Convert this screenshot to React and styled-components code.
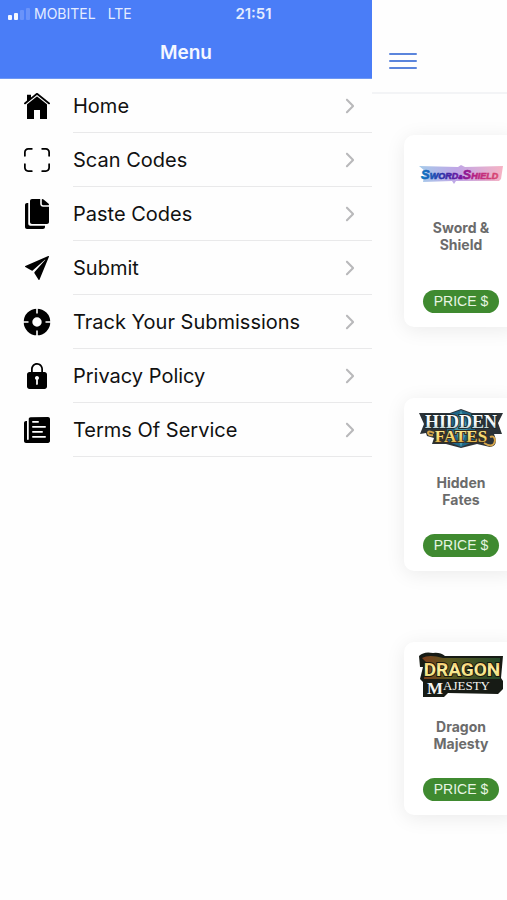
import styled, { createGlobalStyle } from 'styled-components';
import {
    IoIosArrowForward,
    IoIosCopy,
    IoIosHome,
    IoIosLock,
    IoIosPaper,
    IoIosQrScanner,
    IoIosSend,
} from 'react-icons/io';

// solid ring with four slits and an open centre
const TrackIcon = ({ size }) => (
    <svg width={size} height={size} viewBox="0 0 32 32" aria-hidden="true">
        <circle cx="16" cy="16" r="9" fill="none" stroke="#000" strokeWidth="8.6" />
        <path d="M16 2 V7.5 M16 24.5 V30 M2 16 H7.5 M24.5 16 H30" stroke="#fefefe" strokeWidth="1.6" />
    </svg>
);

const links = [
    { label: 'Home', Icon: IoIosHome },
    { label: 'Scan Codes', Icon: IoIosQrScanner },
    { label: 'Paste Codes', Icon: IoIosCopy },
    { label: 'Submit', Icon: IoIosSend },
    { label: 'Track Your Submissions', Icon: TrackIcon },
    { label: 'Privacy Policy', Icon: IoIosLock },
    { label: 'Terms Of Service', Icon: IoIosPaper },
];

const SwordShieldLogo = () => (
    <Logo viewBox="0 0 86 58" $height={58} aria-hidden="true">
        <defs>
            <linearGradient id="sword" gradientUnits="userSpaceOnUse" x1="4" x2="84" y1="0" y2="0">
                <stop offset="0" stopColor="#0f76c0" />
                <stop offset="0.25" stopColor="#2b2fa6" />
                <stop offset="0.48" stopColor="#7416a0" />
                <stop offset="0.65" stopColor="#b51f82" />
                <stop offset="1" stopColor="#e0506e" />
            </linearGradient>
            <linearGradient id="swordBack" x1="0" x2="1">
                <stop offset="0" stopColor="#a5cbea" />
                <stop offset="0.45" stopColor="#c0a6e6" />
                <stop offset="1" stopColor="#f6b3c4" />
            </linearGradient>
        </defs>
        <path d="M1 21 L40 22 L43 20 L47 22 L85 21 L83 34 L81 36 L38 36 L36 39 L34 36 L5 37 L7 26 Z" fill="url(#swordBack)" />
        <text x="3" y="34" fill="url(#sword)" stroke="url(#sword)" strokeWidth="0.6" fontFamily="Liberation Sans, sans-serif" fontWeight="700" fontStyle="italic" fontSize="9">
            <tspan fontSize="13">S</tspan>WORD<tspan fontSize="6">&amp;</tspan><tspan fontSize="13">S</tspan>HIELD
        </text>
    </Logo>
);

const HiddenFatesLogo = () => (
    <Logo viewBox="0 0 86 46" $height={46} aria-hidden="true">
        <defs>
            <linearGradient id="hidden" x1="0" x2="0" y1="0" y2="1">
                <stop offset="0" stopColor="#ffffff" />
                <stop offset="0.6" stopColor="#f0f6f7" />
                <stop offset="1" stopColor="#8fb2b4" />
            </linearGradient>
            <linearGradient id="fates" x1="0" x2="0" y1="0" y2="1">
                <stop offset="0" stopColor="#fff3a0" />
                <stop offset="0.6" stopColor="#f3d465" />
                <stop offset="1" stopColor="#c68e30" />
            </linearGradient>
        </defs>
        <path d="M1 5 H32 L43 1 L54 5 H85 L80 15 L84 26 H76 Q81 38 72 39 L59 36 L43 40 L28 36 H14 L16 30 L9 28 L8 25 L2 26 L6 16 Z" fill="#2c3338" />
        <path d="M43 2 L57 7 V33 L43 39 L29 33 V7 Z" fill="#1f6687" />
        <path d="M43 2 L50 20 L43 39 L36 20 Z" fill="#4596ab" />
        <text x="43" y="20" textAnchor="middle" fill="url(#hidden)" stroke="#20292d" strokeWidth="2" paintOrder="stroke" fontFamily="Liberation Serif, serif" fontWeight="700" fontSize="18">HIDDEN</text>
        <text x="43" y="34" textAnchor="middle" fill="url(#fates)" stroke="#3a2f20" strokeWidth="2" paintOrder="stroke" fontFamily="Liberation Serif, serif" fontWeight="700" fontSize="17">FATES</text>
        <path d="M16 25 Q10 22 10 25 Q11 28 15 27 M66 35 Q76 41 77 32 Q76 27 72 29" fill="none" stroke="#d5a449" strokeWidth="2" />
    </Logo>
);

const DragonMajestyLogo = () => (
    <Logo viewBox="0 0 86 46" $height={46} aria-hidden="true">
        <defs>
            <linearGradient id="dragon" x1="0" x2="0" y1="0" y2="1">
                <stop offset="0" stopColor="#e8a943" />
                <stop offset="0.45" stopColor="#fff0a0" />
                <stop offset="1" stopColor="#dfcf62" />
            </linearGradient>
            <linearGradient id="dragonGlow" x1="0" x2="1">
                <stop offset="0" stopColor="#7d3d1c" />
                <stop offset="0.35" stopColor="#5b5a20" />
                <stop offset="1" stopColor="#24482a" />
            </linearGradient>
        </defs>
        <path d="M1 4 Q6 -1 15 1 Q22 0 27 4 H85 L83 26 L85 29 V37 L80 42 L30 41 L26 45 H5 V30 L2 27 L5 15 H2 Z" fill="#171b15" />
        <path d="M4 6 Q11 2 25 6 H82 V27 H6 L8 10 Z" fill="url(#dragonGlow)" />
        <text x="44" y="24" textAnchor="middle" fill="url(#dragon)" stroke="#17170f" strokeWidth="2" paintOrder="stroke" fontFamily="Roboto, sans-serif" fontWeight="700" fontSize="19">DRAGON</text>
        <text x="9" y="42" fill="#f4f5f2" fontFamily="Liberation Serif, serif" fontWeight="700" fontSize="17">
            M<tspan y="38" fontSize="13" fontWeight="400">AJESTY</tspan>
        </text>
    </Logo>
);

const sets = [
    { name: 'Sword & Shield', Artwork: SwordShieldLogo, tall: true },
    { name: 'Hidden Fates', Artwork: HiddenFatesLogo },
    { name: 'Dragon Majesty', Artwork: DragonMajestyLogo },
];

const App = () => {
    return (<>
        <GlobalStyle />
        <Screen>
            <Drawer>
                <DrawerHeader>
                    <h1>Menu</h1>
                </DrawerHeader>
                <nav>
                    {links.map(({ label, Icon }) =>
                        <MenuLink key={label} href="#">
                            <Icon size={32} />
                            <MenuLabel>{label}<IoIosArrowForward size={22} color="#b9b9bb" /></MenuLabel>
                        </MenuLink>
                    )}
                </nav>
            </Drawer>
            <Page>
                <Toolbar>
                    <MenuButton type="button" aria-label="Toggle menu">
                        <span /><span /><span />
                    </MenuButton>
                </Toolbar>
                <Cards>
                    {sets.map(({ name, Artwork, tall }) =>
                        <Card key={name}>
                            <Artwork />
                            <Name $tall={tall}>{name}</Name>
                            <Price type="button">PRICE $</Price>
                        </Card>
                    )}
                </Cards>
            </Page>
            <StatusBar>
                <Carrier>
                    <Signal><i /><i /><i /><i /></Signal>
                    <span>MOBITEL</span>
                    <span>LTE</span>
                </Carrier>
                <Time>21:51</Time>
            </StatusBar>
        </Screen>
    </>);
};

const GlobalStyle = createGlobalStyle`
    * {
        box-sizing: border-box;
    }

    body {
        margin: 0;
        background: #fefefe;
        font-family: Inter, "Liberation Sans", sans-serif;
    }
`;

const Screen = styled.div`
    position: relative;
    display: grid;
    grid-template-columns: minmax(0, 1fr) 135px;
    min-height: 100vh;
    overflow: hidden;
`;

const StatusBar = styled.div`
    position: absolute;
    top: 0;
    left: 0;
    right: 0;
    display: grid;
    grid-template-columns: 1fr auto 1fr;
    align-items: center;
    height: 27px;
    padding: 0 8px;
    color: #e4ecff;
    font-size: 14px;
`;

const Carrier = styled.div`
    display: flex;
    align-items: center;
    gap: 12px;
`;

const Signal = styled.div`
    display: flex;
    align-items: flex-end;
    gap: 2px;
    margin-right: -8px;

    i {
        width: 4px;
        height: 5px;
        border-radius: 1px;
        background: #f4f7ff;
    }

    i:nth-child(2) {
        height: 7px;
    }

    i:nth-child(3) {
        height: 10px;
        background: #6a93fa;
    }

    i:nth-child(4) {
        height: 12px;
        background: #6a93fa;
    }
`;

const Time = styled.span`
    font-size: 15px;
    font-weight: 600;
`;

const Drawer = styled.aside`
    background: #fefefe;
`;

const DrawerHeader = styled.header`
    display: flex;
    justify-content: center;
    align-items: flex-end;
    height: 79px;
    padding-bottom: 13px;
    background: #4a7df7;
    border-bottom: 1px solid #6f98f3;

    h1 {
        margin: 0;
        color: #f4f7ff;
        font-size: 19px;
        line-height: 24px;
        font-weight: 600;
    }
`;

const MenuLink = styled.a`
    display: flex;
    align-items: center;
    height: 54px;
    padding-left: 21px;
    color: #000;
    text-decoration: none;

    svg {
        flex: none;
    }
`;

const MenuLabel = styled.span`
    display: flex;
    flex: 1;
    align-items: center;
    justify-content: space-between;
    height: 54px;
    margin-left: 20px;
    padding-right: 11px;
    border-bottom: 1px solid #e9e9ea;
    color: #111;
    font-size: 20px;
`;

const Page = styled.main`
    min-width: 0;
`;

const Toolbar = styled.header`
    display: flex;
    align-items: flex-end;
    height: 94px;
    padding: 0 17px 23px;
    border-bottom: 2px solid #f3f4f6;
`;

const MenuButton = styled.button`
    display: grid;
    gap: 5px;
    width: 28px;
    padding: 0;
    border: 0;
    background: none;

    span {
        height: 2px;
        border-radius: 1px;
        background: #5b85dc;
    }
`;

const Cards = styled.div`
    display: grid;
    justify-content: start;
    gap: 71px;
    padding: 41px 0 41px 32px;
`;

const Card = styled.article`
    display: flex;
    flex-direction: column;
    align-items: center;
    width: 114px;
    padding: 10px 14px 14px;
    border-radius: 10px;
    background: #fff;
    box-shadow: 0 3px 20px rgba(0, 0, 0, 0.08);
`;

const Logo = styled.svg`
    display: block;
    width: 86px;
    height: ${({ $height }) => $height}px;
`;

const Name = styled.h2`
    width: 72px;
    margin: ${({ $tall }) => $tall ? '16px 0 37px' : '20px 0 26px'};
    color: #6b6b6b;
    font-size: 14px;
    line-height: 17px;
    font-weight: 700;
    text-align: center;
`;

const Price = styled.button`
    width: 76px;
    height: 23px;
    padding: 0 0 1px;
    border: 0;
    border-radius: 12px;
    background: #3f8a30;
    color: #e7f5e3;
    font-family: "Liberation Sans", Arial, sans-serif;
    font-size: 14px;
`;

export default App;
